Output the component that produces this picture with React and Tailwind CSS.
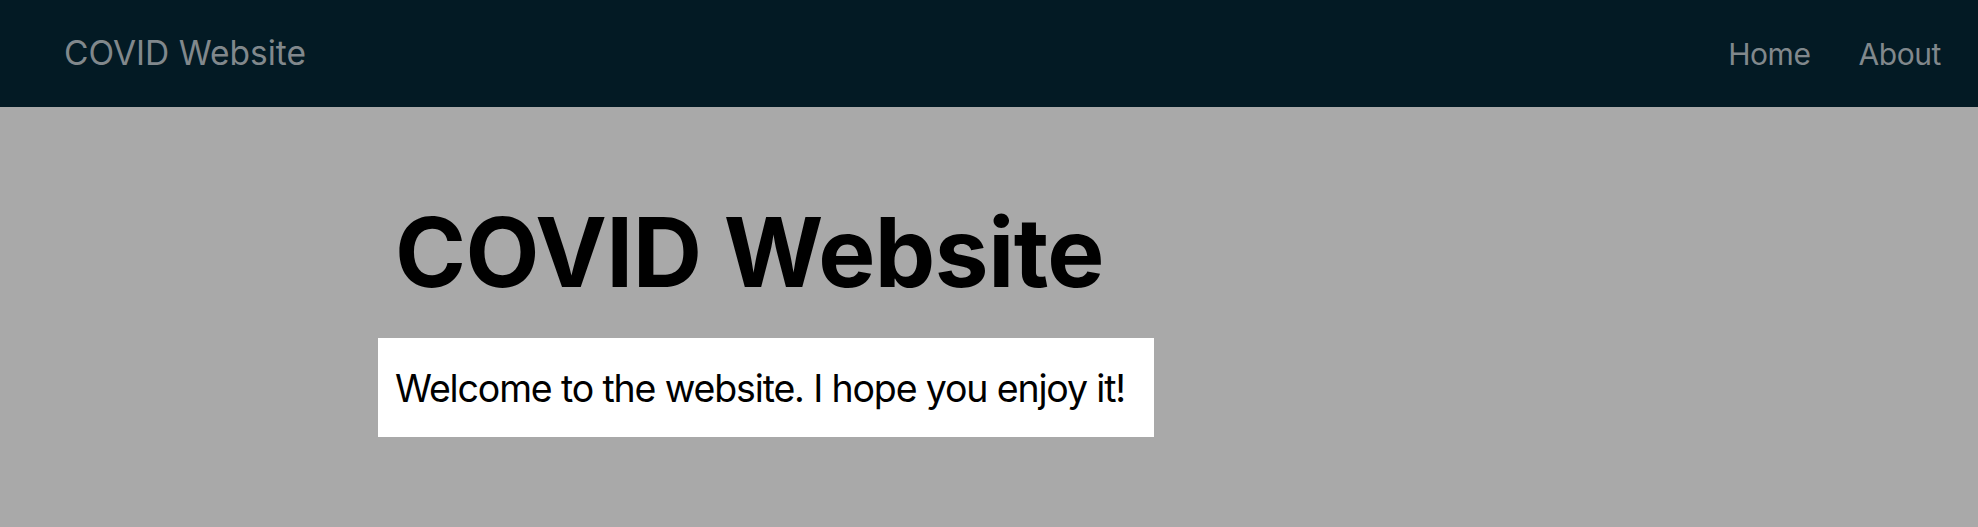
export default function App() {
  return (
    <div className="min-h-[527px] bg-[#a9a9a9]" style={{ fontFamily: "Inter, 'Noto Sans', sans-serif" }}>
      <nav className="h-[107px] bg-[#031a24] flex items-center justify-between pl-[64px] pr-[37px]">
        <span className="text-[33.5px] text-[#81888c] leading-none">COVID Website</span>
        <div className="flex items-center gap-[48px]">
          <span className="text-[30px] text-[#81888c] leading-none tracking-[-0.5px]">Home</span>
          <span className="text-[30px] text-[#81888c] leading-none tracking-[-0.4px]">About</span>
        </div>
      </nav>
      <main className="pl-[378px] pt-[97px]">
        <h1 className="text-[96px] font-bold leading-none text-black px-[17px] tracking-[-0.5px]">COVID Website</h1>
        <div className="mt-[38px] w-[776px] h-[99px] bg-white pl-[17px] pt-[22px]">
          <p className="text-[37.5px] leading-[57px] text-black whitespace-nowrap tracking-[-1.15px]">Welcome to the website. I hope you enjoy it!</p>
        </div>
      </main>
    </div>
  );
}
